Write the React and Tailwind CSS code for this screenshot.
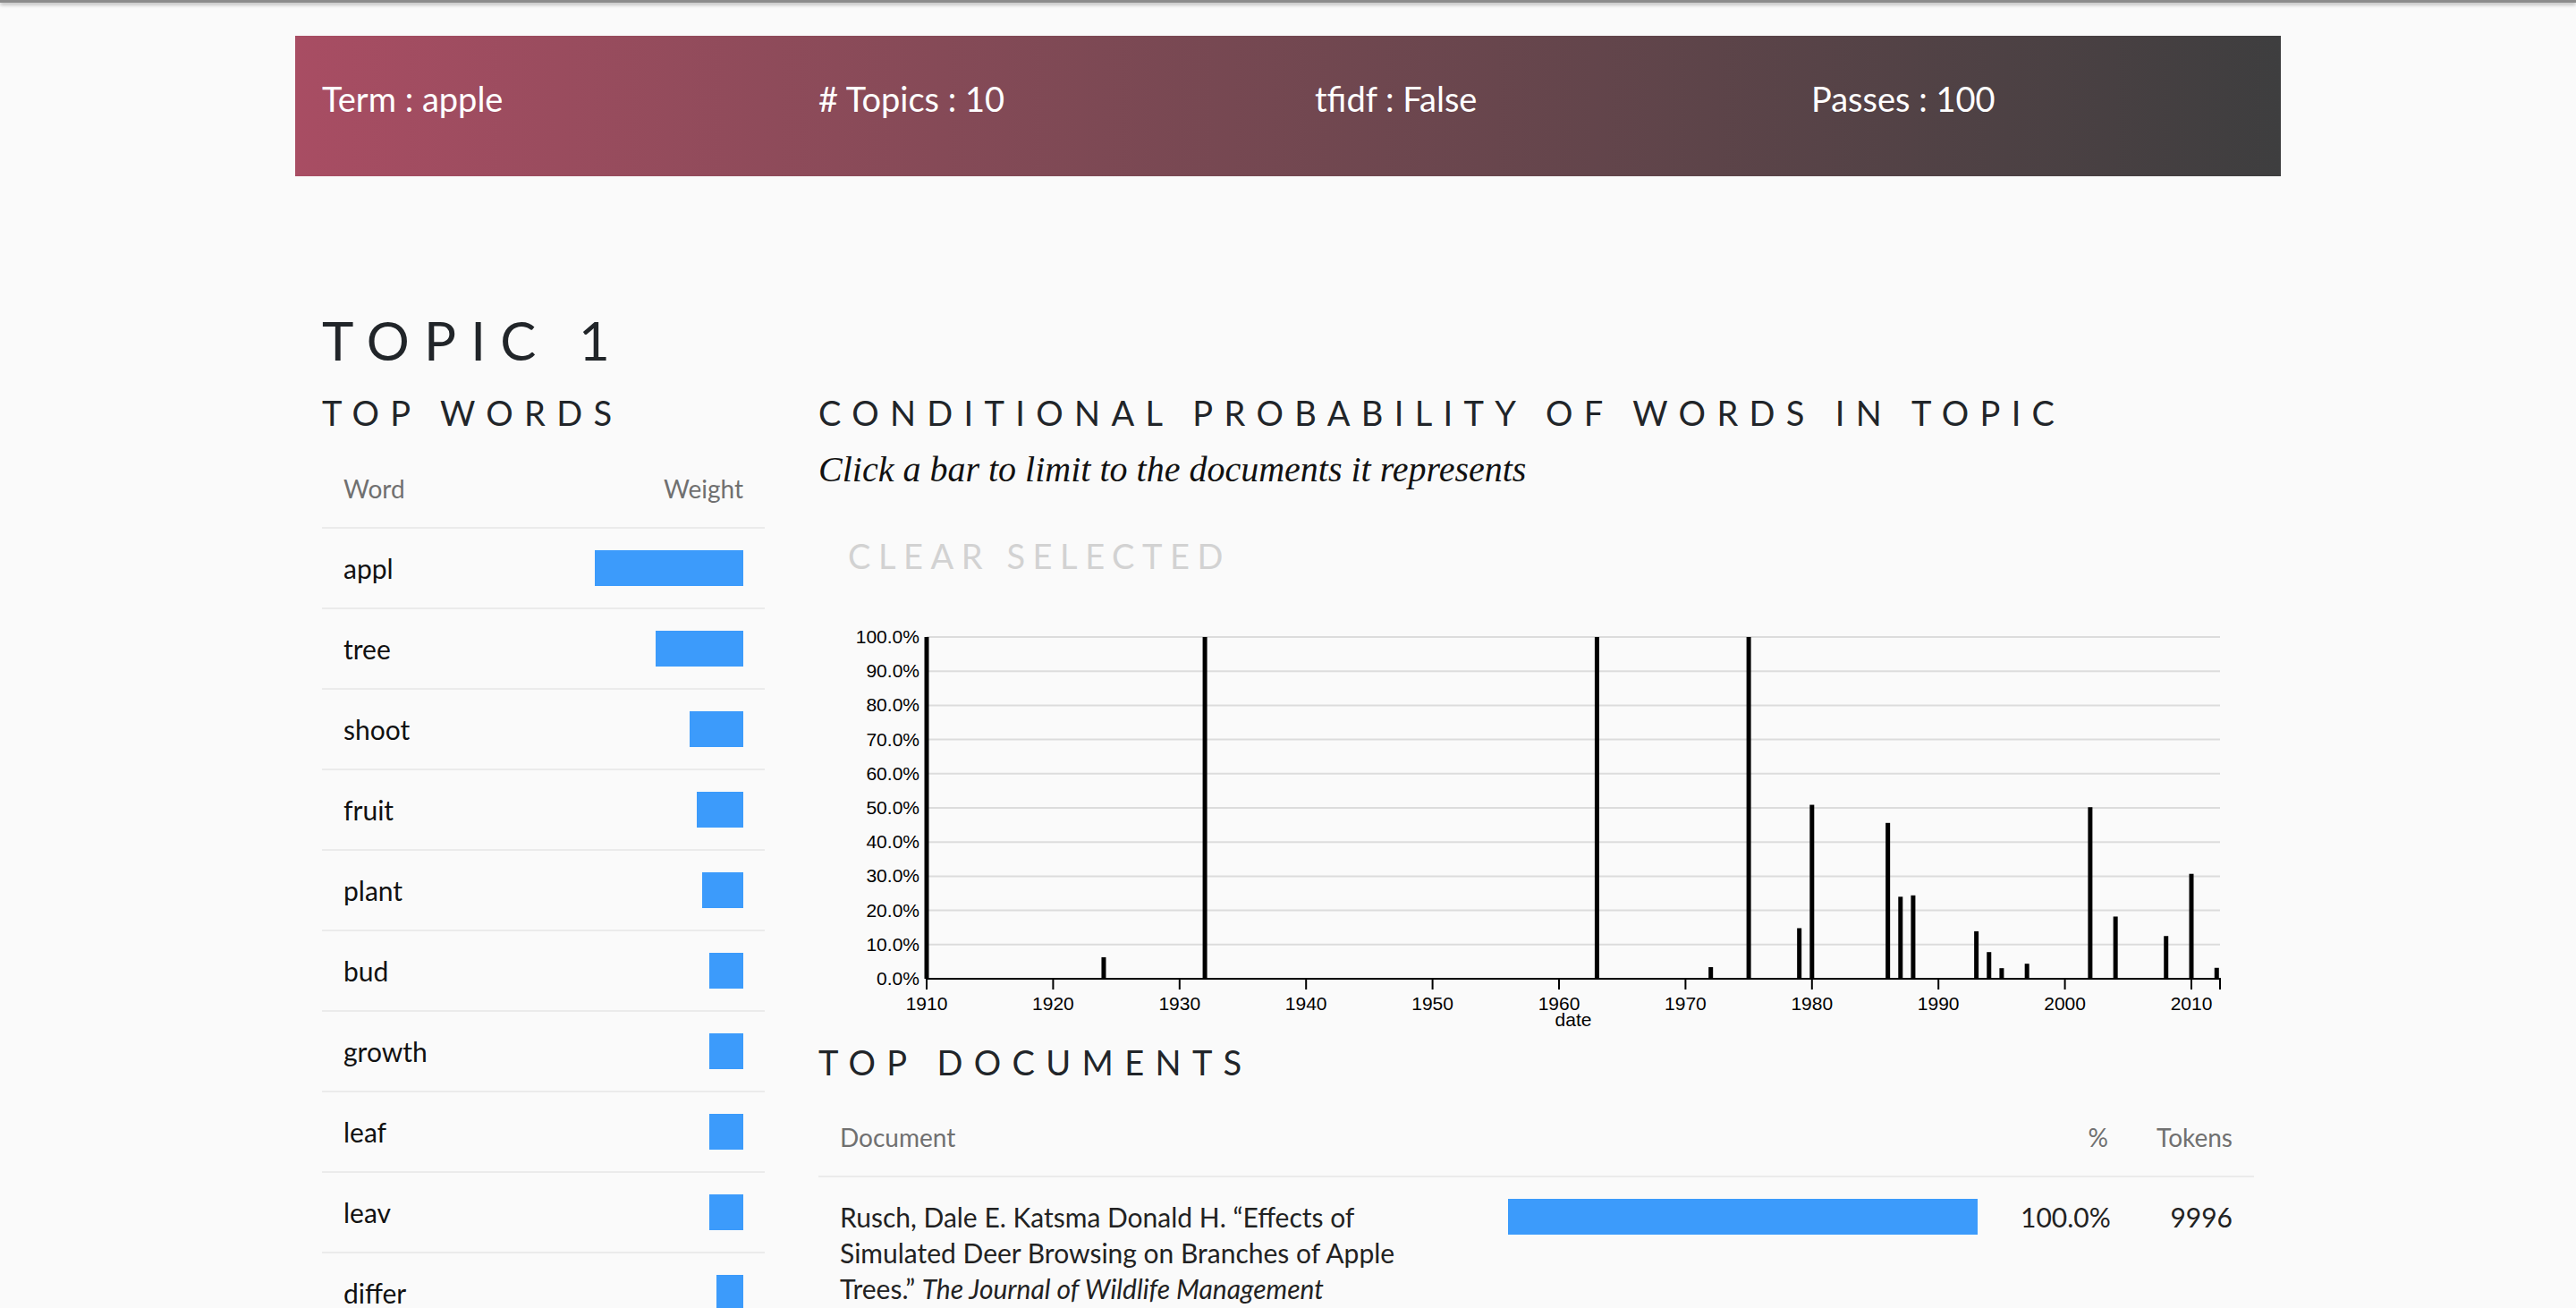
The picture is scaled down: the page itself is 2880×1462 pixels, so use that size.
import React from 'react';

const SANS = { fontFamily: 'Lato, "Open Sans", sans-serif' };

const words = [
  { word: 'appl', w: 166 },
  { word: 'tree', w: 98 },
  { word: 'shoot', w: 60 },
  { word: 'fruit', w: 52 },
  { word: 'plant', w: 46 },
  { word: 'bud', w: 38 },
  { word: 'growth', w: 38 },
  { word: 'leaf', w: 38 },
  { word: 'leav', w: 38 },
  { word: 'differ', w: 30 },
];

const bars = [
  [1910, 100], [1924, 6.3], [1932, 100], [1963, 100], [1972, 3.4], [1975, 100],
  [1979, 14.8], [1980, 50.9], [1986, 45.6], [1987, 24], [1988, 24.4],
  [1993, 13.9], [1994, 7.8], [1995, 3.1], [1997, 4.4], [2002, 50.2],
  [2004, 18.2], [2008, 12.5], [2010, 30.7], [2012, 3.2],
];

const X0 = 121;
const X1 = 1567;
const PER_YEAR = 14.14;
const TOP = 32;
const BASE = 414;
const xOf = (yr) => X0 + (yr - 1910) * PER_YEAR;
const yOf = (v) => BASE - (v / 100) * (BASE - TOP);

function Chart() {
  const grid = [0, 10, 20, 30, 40, 50, 60, 70, 80, 90, 100];
  const decades = [1910, 1920, 1930, 1940, 1950, 1960, 1970, 1980, 1990, 2000, 2010];
  return (
    <svg width="1605" height="480" className="block" style={{ fontFamily: '"Liberation Sans", Arial, sans-serif' }}>
      {grid.map((g) => (
        <g key={g}>
          <line x1={X0} x2={X1} y1={yOf(g)} y2={yOf(g)} stroke="#dcdcdc" strokeWidth="2" />
          <text x={X0 - 8} y={yOf(g) + 7} textAnchor="end" fontSize="21" fill="#000">
            {g.toFixed(1)}%
          </text>
        </g>
      ))}
      {bars.map(([yr, v]) => (
        <rect key={yr} x={xOf(yr) - 2.5} y={yOf(v)} width="5" height={BASE - yOf(v)} fill="#000" />
      ))}
      <path d={`M${X0},426V${BASE}H${X1}V426`} fill="none" stroke="#000" strokeWidth="2" />
      {decades.map((d) => (
        <g key={d}>
          <line x1={xOf(d)} x2={xOf(d)} y1={BASE} y2={426} stroke="#000" strokeWidth="2" />
          <text x={xOf(d)} y={449} textAnchor="middle" fontSize="21" fill="#000">{d}</text>
        </g>
      ))}
      <text x={844} y={467} textAnchor="middle" fontSize="21" fill="#000">date</text>
    </svg>
  );
}

export default function App() {
  return (
    <div className="min-h-screen bg-[#fafafa] text-[#212529]" style={SANS}>
      <div className="h-[3px] bg-[#8c8c8c] shadow-[0_2px_4px_rgba(0,0,0,0.35)]" />

      <div className="w-[2220px] mx-auto">
        <div className="mt-[37px] h-[157px] pb-[16px] grid grid-cols-4 items-center text-white text-[38px] bg-gradient-to-r from-[#a84d63] to-[#3e3e3f]">
          <div className="px-[30px]">Term : apple</div>
          <div className="px-[30px]"># Topics : 10</div>
          <div className="px-[30px]">tfidf : False</div>
          <div className="px-[30px]">Passes : 100</div>
        </div>

        <div className="px-[30px]">
          <h1 className="mt-[147px] text-[60px] leading-[72px] tracking-[0.27em] uppercase">Topic 1</h1>

          <div className="mt-[22px] grid grid-cols-[495px_1605px] gap-x-[60px] items-start">
            {/* left column */}
            <div>
              <h2 className="text-[38px] leading-[46px] tracking-[0.325em] uppercase">Top Words</h2>
              <div className="mt-[19px]">
                <div className="h-[88px] flex items-center justify-between px-[24px] border-b-2 border-[#ebebeb] text-[28px] text-[#707070]">
                  <span>Word</span>
                  <span>Weight</span>
                </div>
                {words.map((r) => (
                  <div key={r.word} className="flex justify-between px-[24px] pt-[24px] pb-[24px] border-b-2 border-[#ebebeb]">
                    <span className="text-[30px] leading-[40px] text-[#111]">{r.word}</span>
                    <div className="h-[40px] bg-[#3c9bfb]" style={{ width: r.w }} />
                  </div>
                ))}
              </div>
            </div>

            {/* right column */}
            <div>
              <h2 className="text-[38px] leading-[46px] tracking-[0.325em] uppercase">
                Conditional probability of words in topic
              </h2>
              <p
                className="mt-[18px] text-[40px] leading-[46px] italic text-[#111]"
                style={{ fontFamily: '"Liberation Serif", "Times New Roman", serif' }}
              >
                Click a bar to limit to the documents it represents
              </p>
              <button className="mt-[50px] ml-[33px] block text-[38px] leading-[46px] tracking-[0.225em] uppercase text-[#d2d2d2]">
                Clear selected
              </button>
              <div className="mt-[36px]">
                <Chart />
              </div>
              <h2 className="mt-[4px] text-[38px] leading-[46px] tracking-[0.325em] uppercase">Top Documents</h2>
              <div className="mt-[18px]">
                <div className="h-[88px] grid grid-cols-[747px_573px_146px_139px] items-center border-b-2 border-[#ebebeb] text-[28px] text-[#707070]">
                  <span className="px-[24px]">Document</span>
                  <span />
                  <span className="px-[24px] text-right">%</span>
                  <span className="px-[24px] text-right">Tokens</span>
                </div>
                <div className="grid grid-cols-[747px_573px_146px_139px] items-start py-[24px] border-b-2 border-[#ebebeb] text-[30px] leading-[40px] text-[#222]">
                  <div className="px-[24px]">
                    Rusch, Dale E. Katsma Donald H. “Effects of Simulated Deer Browsing on Branches of Apple Trees.”{' '}
                    <i>The Journal of Wildlife Management</i>
                  </div>
                  <div className="px-[24px]">
                    <div className="h-[40px] bg-[#3c9bfb] w-full" />
                  </div>
                  <div className="px-[24px] text-right">100.0%</div>
                  <div className="px-[24px] text-right">9996</div>
                </div>
              </div>
            </div>
          </div>
        </div>
      </div>
    </div>
  );
}
